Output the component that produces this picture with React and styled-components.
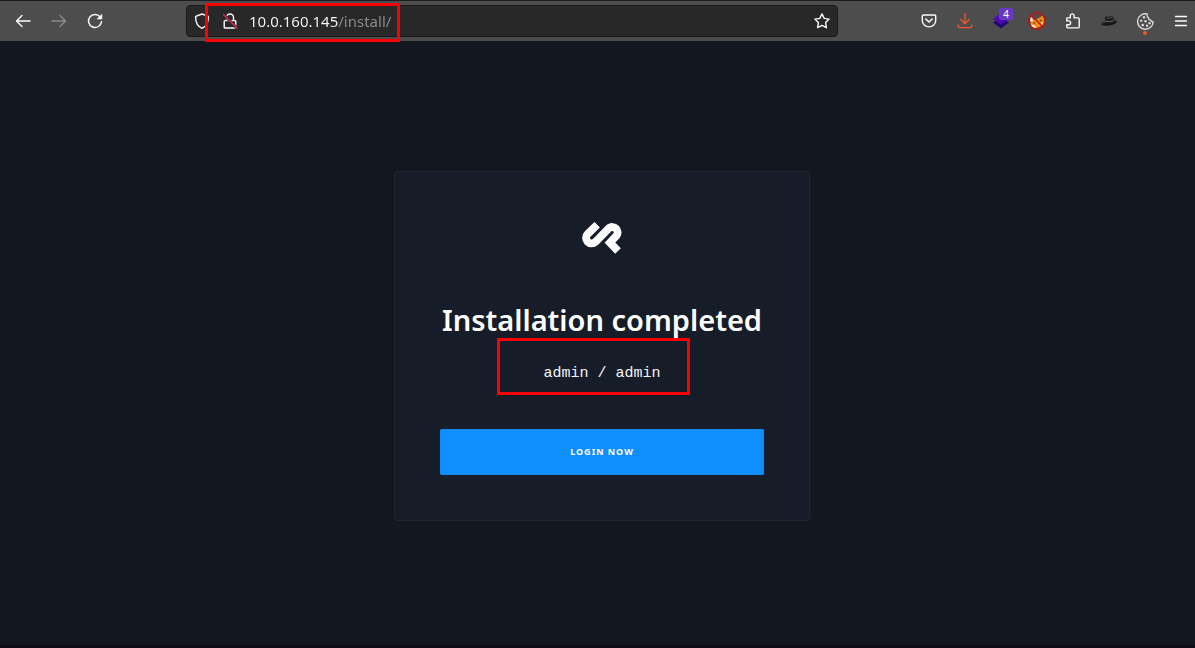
import React from "react";
import styled, { createGlobalStyle } from "styled-components";

const GlobalStyle = createGlobalStyle`
  *, *::before, *::after { box-sizing: border-box; }
  body {
    margin: 0;
    background: #13171f;
    font-family: "Noto Sans", "Open Sans", sans-serif;
    color: #fff;
  }
`;

const Window = styled.div`
  min-height: 100vh;
  display: flex;
  flex-direction: column;
`;

const Toolbar = styled.header`
  display: flex;
  align-items: center;
  height: 41px;
  padding-left: 9px;
  background: #4d4d4d;
  border-top: 1px solid #1c1b1f;
`;

const ButtonGroup = styled.div`
  display: flex;
  gap: 8px;
`;

const IconButton = styled.button`
  position: relative;
  flex: none;
  display: flex;
  align-items: center;
  justify-content: center;
  width: 28px;
  height: 28px;
  padding: 0;
  border: 0;
  border-radius: 4px;
  background: none;
  color: ${(p) => p.$color || "#fbfbfe"};
`;

const AddressBar = styled.form`
  position: relative;
  flex: 1;
  min-width: 0;
  display: flex;
  align-items: center;
  height: 32px;
  margin: 0 77px;
  padding: 0 1px;
  background: #282828;
  border: 1px solid #1a1a1a;
  border-radius: 4px;
`;

const AddressInput = styled.input`
  flex: 1;
  min-width: 0;
  margin: 0 0 0 5px;
  padding: 0;
  border: 0;
  outline: 0;
  font: 15px/24px "Noto Sans", sans-serif;
  color: #fbfbfe;
  background: linear-gradient(90deg, #fbfbfe 89px, #8e8e90 89px);
  background-clip: text;
  -webkit-text-fill-color: transparent;
`;

const Highlight = styled.div`
  position: absolute;
  top: ${(p) => p.$top}px;
  left: ${(p) => p.$left}px;
  width: ${(p) => p.$width}px;
  height: ${(p) => p.$height}px;
  border: 3px solid #fa0000;
  pointer-events: none;
`;

const Badge = styled.span`
  position: absolute;
  top: 1px;
  right: 2px;
  width: 14px;
  height: 12px;
  border-radius: 2px;
  background: #6a39c4;
  color: #fff;
  font: 10px/12px "Noto Sans", sans-serif;
  text-align: center;
`;

const Dot = styled.span`
  position: absolute;
  bottom: 0;
  left: 12px;
  width: 4px;
  height: 4px;
  border-radius: 50%;
  background: #f0582a;
`;

const Page = styled.main`
  flex: 1;
  display: flex;
  align-items: center;
  justify-content: center;
  padding: 5px 0 0 9px;
  border-bottom: 3px solid #100e19;
`;

const Card = styled.section`
  display: flex;
  flex-direction: column;
  align-items: center;
  width: 416px;
  padding: 45px;
  background: #171d28;
  border: 1px solid #22262f;
  border-radius: 3px;
`;

const Logo = styled.svg`
  width: 40px;
  height: 32px;
  margin-top: 5px;
`;

const Title = styled.h1`
  margin: 46px 0 0;
  font-size: 29px;
  line-height: 40px;
  font-weight: 600;
  white-space: nowrap;
`;

const Credentials = styled.div`
  position: relative;
  margin: 24px 0 45px;
`;

const Code = styled.code`
  display: block;
  font: 15px/20px "Liberation Mono", monospace;
  color: #f4f4f4;
`;

const LoginButton = styled.button`
  width: 100%;
  height: 46px;
  border: 0;
  border-radius: 2px;
  background: #0f8fff;
  color: #fff;
  font: 700 9px/12px "Noto Sans", sans-serif;
  letter-spacing: 1px;
  text-transform: uppercase;
`;

const Icon = ({ children, size = 16 }) => (
  <svg width={size} height={size} viewBox="0 0 16 16" fill="none" stroke="currentColor" strokeWidth="1.4" strokeLinecap="round" strokeLinejoin="round" aria-hidden="true">
    {children}
  </svg>
);

const BackIcon = () => <Icon><path d="M15 8H1.5M7 2.5L1.5 8L7 13.5" /></Icon>;
const ForwardIcon = () => <Icon><path d="M1 8H14.5M9 2.5L14.5 8L9 13.5" /></Icon>;
const ReloadIcon = () => (
  <Icon>
    <path d="M13.2 4A6.5 6.5 0 1 0 14.5 8.6" />
    <path d="M14.9 1.5V6H10.4Z" fill="currentColor" strokeWidth="0.6" />
  </Icon>
);
const ShieldIcon = () => (
  <Icon><path d="M8 1L14.3 3.3C14.6 8.8 12.8 13.3 8 15.3C3.2 13.3 1.4 8.8 1.7 3.3Z" /></Icon>
);
const InsecureIcon = () => (
  <Icon>
    <path d="M4.5 7.5V4.5A3.5 3.5 0 0 1 11.5 4.5V7.5M3 7.6H13A0.8 0.8 0 0 1 13.8 8.4V14A1 1 0 0 1 12.8 15H3.2A1 1 0 0 1 2.2 14V8.4A0.8 0.8 0 0 1 3 7.6Z" />
    <path d="M1.5 1.5L15 15" stroke="#282828" strokeWidth="3" />
    <path d="M1.5 1.5L15 15" stroke="#e22850" />
  </Icon>
);
const StarIcon = () => (
  <Icon><path d="M8 .9L10.2 5.4L15.1 6.1L11.6 9.6L12.4 14.7L8 12.4L3.6 14.7L4.4 9.6L.9 6.1L5.8 5.4Z" /></Icon>
);
const PocketIcon = () => (
  <Icon>
    <path d="M2.4 2H13.6A1.1 1.1 0 0 1 14.7 3.1V7.6A6.7 6.3 0 0 1 1.3 7.6V3.1A1.1 1.1 0 0 1 2.4 2Z" />
    <path d="M4.8 6L8 9L11.2 6" strokeWidth="1.6" />
  </Icon>
);
const DownloadIcon = () => (
  <Icon><path d="M8 .8V10.5M3.8 6.5L8 10.7L12.2 6.5M1.2 12.3V13A1.6 1.6 0 0 0 2.8 14.6H13.2A1.6 1.6 0 0 0 14.8 13V12.3" /></Icon>
);
const LayersIcon = () => (
  <Icon>
    <path d="M0 9.6L8 4L16 9.6L8 15.6Z" fill="#220675" stroke="none" />
    <path d="M0 5.7L8 0L16 5.7L8 11.5Z" fill="#5309b4" stroke="none" />
  </Icon>
);
const FoxIcon = () => (
  <Icon size={18}>
    <path d="M3.8 6.2L6.8 7.2L9.6 5.4L13 3L14.4 6.2L13.6 11L10.4 13.4L6.8 14.4L3 12.2L2.2 9.4Z" fill="#f08c14" stroke="none" />
    <path d="M2.2 4.4L4 5.4L4.4 8L2 8.6Z" fill="#eceae6" stroke="none" />
    <path d="M2.8 11L5 11.4L7.4 13L6.2 14.4L3.6 13Z" fill="#f6e3c8" stroke="none" />
    <path d="M11.4 10.2L13.8 8.4L13 11.4Z" fill="#f8ddb0" stroke="none" />
    <path d="M5 9.8H5.8M10.8 7.4H11.6" stroke="#41200c" strokeWidth="1" />
    <circle cx="8" cy="8" r="7.3" stroke="#c90f0b" strokeWidth="1.2" />
    <path d="M2.9 2.9L13.1 13.1" stroke="#c90f0b" strokeWidth="1.1" />
  </Icon>
);
const PuzzleIcon = () => (
  <Icon>
    <path d="M2.2 4.9H5.3V2.8A1.9 1.9 0 0 1 9.1 2.8V4.9H13A1.2 1.2 0 0 1 14.2 6.1V13.7A1.2 1.2 0 0 1 13 14.9H3A1.2 1.2 0 0 1 1.8 13.7V11.7H3.7A1.9 1.9 0 0 0 3.7 7.9H1.8V5.3Z" />
  </Icon>
);
const HatIcon = () => (
  <Icon>
    <ellipse cx="8" cy="9.8" rx="7.9" ry="2.8" transform="rotate(-8 8 9.8)" fill="#171717" stroke="none" />
    <path d="M1.2 10.4Q2 9 4 8.8" stroke="#777" strokeWidth="0.8" />
    <path d="M4 9.2V4.6Q4.5 3 7 3.8Q11 2.2 12.6 4.4L12.8 8.8Q8 11.5 4 9.2Z" fill="#1c1c1c" stroke="none" />
    <path d="M6 5Q8.6 5.6 11 4.6" stroke="#666" strokeWidth="0.7" />
    <path d="M4.3 8.2Q8 9.7 12.6 7.9" stroke="#777" strokeWidth="0.8" />
  </Icon>
);
const CookieIcon = () => (
  <Icon size={17}>
    <path d="M9.6 .9A7.3 7.3 0 1 0 15.2 8.2Q13.4 8.4 12.8 6.6Q10.6 6.6 10.8 4.4Q9 3.4 9.6 .9Z" stroke="#dadada" strokeWidth="1.3" />
    <g fill="#dadada" stroke="none">
      <circle cx="6.6" cy="4" r="1.1" /><circle cx="4" cy="7.2" r="1.1" /><circle cx="8" cy="7.8" r="1.1" />
      <circle cx="5.4" cy="11.4" r="1.2" /><circle cx="9.4" cy="12" r="1.1" /><circle cx="11.8" cy="9.6" r="1.1" />
    </g>
  </Icon>
);
const MenuIcon = () => <Icon><path d="M2.5 3.5H13.5M2.5 8H13.5M2.5 12.5H13.5" strokeWidth="1.3" /></Icon>;

export default function App() {
  return (
    <>
      <GlobalStyle />
      <Window>
        <Toolbar>
          <ButtonGroup>
            <IconButton aria-label="Back"><BackIcon /></IconButton>
            <IconButton aria-label="Forward" disabled $color="#8b8b8d"><ForwardIcon /></IconButton>
            <IconButton aria-label="Reload"><ReloadIcon /></IconButton>
          </ButtonGroup>
          <AddressBar onSubmit={(e) => e.preventDefault()}>
            <IconButton type="button" aria-label="Tracking protection"><ShieldIcon /></IconButton>
            <IconButton type="button" aria-label="Connection not secure"><InsecureIcon /></IconButton>
            <AddressInput aria-label="Address" defaultValue="10.0.160.145/install/" spellCheck={false} />
            <IconButton type="button" aria-label="Bookmark this page"><StarIcon /></IconButton>
            <Highlight $top={-3} $left={18} $width={195} $height={39} />
          </AddressBar>
          <ButtonGroup>
            <IconButton aria-label="Save to Pocket"><PocketIcon /></IconButton>
            <IconButton aria-label="Downloads" $color="#f0582a"><DownloadIcon /></IconButton>
            <IconButton aria-label="Layers extension"><LayersIcon /><Badge>4</Badge></IconButton>
            <IconButton aria-label="Proxy extension"><FoxIcon /></IconButton>
            <IconButton aria-label="Extensions"><PuzzleIcon /></IconButton>
            <IconButton aria-label="Hat extension"><HatIcon /></IconButton>
            <IconButton aria-label="Cookie extension"><CookieIcon /><Dot /></IconButton>
            <IconButton aria-label="Application menu"><MenuIcon /></IconButton>
          </ButtonGroup>
        </Toolbar>
        <Page>
          <Card>
            <Logo viewBox="0 0 40 32" fill="none" stroke="#fff" strokeWidth="7.8" role="img" aria-label="Logo">
              <path d="M15.2 2.8L5.8 11.9A5.5 5.5 0 0 0 13.4 19.9L27.1 6A5.4 5.4 0 0 1 34.7 13.4L28 20.6L36 29" />
            </Logo>
            <Title>Installation completed</Title>
            <Credentials>
              <Code>admin / admin</Code>
              <Highlight $top={-26} $left={-46} $width={193} $height={57} />
            </Credentials>
            <LoginButton>Login now</LoginButton>
          </Card>
        </Page>
      </Window>
    </>
  );
}
